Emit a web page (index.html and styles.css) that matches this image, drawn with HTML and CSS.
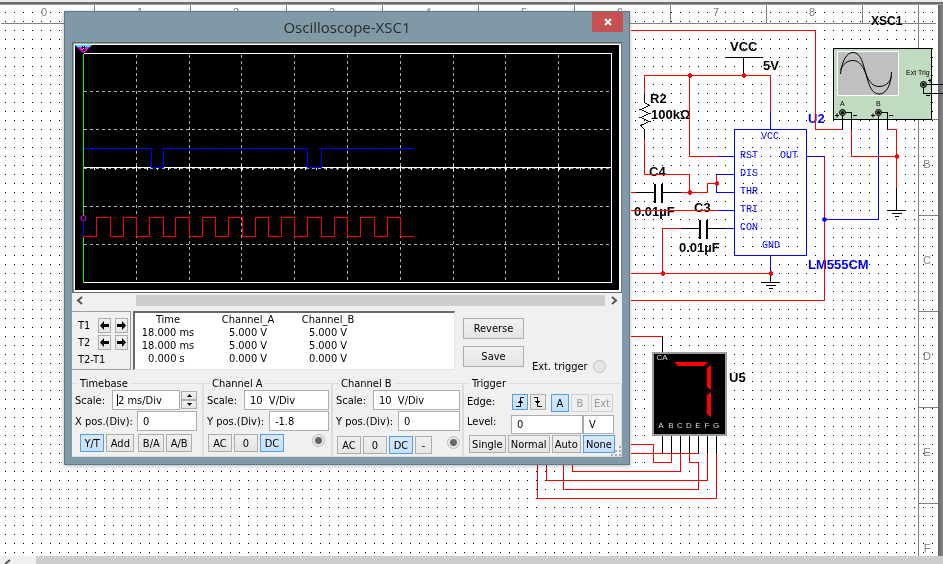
FILE: index.html
```html
<!DOCTYPE html>
<html lang="en">
<head>
<meta charset="utf-8">
<title>Oscilloscope-XSC1</title>
<link rel="stylesheet" href="styles.css">
</head>
<body>
<main class="workspace">
  <div class="sheet-top"></div>
  <div class="sheet">
    <svg class="schematic" width="938" height="551" viewBox="0 5 938 551" role="img" aria-label="Schematic">
      <defs>
        <pattern id="dots" x="5" y="3" width="9" height="9" patternUnits="userSpaceOnUse"><rect width="1" height="1" fill="#000"/></pattern>
      </defs>
      <rect x="0" y="10" width="938" height="544" fill="url(#dots)"/>
      <g transform="translate(.5 .5)">
        <path class="frame" d="M0 23H935M918 4V555M94 4V23M190 4V23M286 4V23M382 4V23M478 4V23M574 4V23M670 4V23M766 4V23M862 4V23M918 119H937M918 215H937M918 311H937M918 407H937M918 503H937"/>
      </g>
      <g class="ruler">
        <text x="44" y="16">0</text><text x="140" y="16">1</text><text x="236" y="16">2</text><text x="332" y="16">3</text><text x="428" y="16">4</text><text x="524" y="16">5</text><text x="620" y="16">6</text><text x="716" y="16">7</text><text x="812" y="16">8</text>
        <text x="927" y="168">B</text><text x="927" y="264">C</text><text x="927" y="360">D</text><text x="927" y="456">E</text><text x="927" y="552">F</text>
      </g>

      <g class="parts">
        <text x="871" y="25" class="small">XSC1</text>
        <text x="730" y="51">VCC</text><text x="763" y="70">5V</text>
        <text x="650" y="103">R2</text><text x="651" y="119">100kΩ</text>
        <text x="649" y="176">C4</text><text x="634" y="216">0.01µF</text>
        <text x="694" y="212">C3</text><text x="679" y="252">0.01µF</text>
        <text x="729" y="382">U5</text>
        <text x="808" y="123" class="ic">U2</text><text x="808" y="269" class="ic">LM555CM</text>
      </g>
      <g class="pins">
        <text x="761" y="139">VCC</text><text x="740" y="158">RST</text><text x="740" y="176">DIS</text><text x="740" y="194">THR</text><text x="740" y="212">TRI</text><text x="740" y="230">CON</text><text x="762" y="248">GND</text><text x="780" y="158">OUT</text>
      </g>

      <rect x="833.5" y="48.5" width="98" height="71" fill="#c0dcc0" stroke="#000"/>
      <rect x="837.5" y="51.5" width="61" height="44" fill="#c0c0c0" stroke="#fff"/>
      <path class="trace" d="M840.5 74C842 60 847 52.500 853 52.500C861 52.500 863 64 866 74C869 86 872 94 879 94C886 94 891 86 891.500 72M840.500 70C843 64 847 60.500 853 60.500C860 60.500 863 67 866 74C869 82 873 86.500 879 86.500C885 86.500 890 83 891.500 76"/>
      <g class="tiny"><text x="906" y="75">Ext Trig</text><text x="840" y="106">A</text><text x="876" y="106">B</text></g>
      <path class="marks" d="M835 115.500h4M837 113.500v4M853 115.500h4M871 115.500h4M873 113.500v4M889 115.500h4M928 80.500h4M930 78.500v4M926 95.500h4"/>

      <g transform="translate(.5 .5)">
        <path class="wire" d="M630 30H815V129H842M851 129V156H896M887 129H896V187M644 93V75H770V111M689 75V156H717M644 138V174H689V192M630 192H635M680 192H707V183H716V174M630 210H717M680 228H662V273M630 273H770M824 156V300H630M630 336H662"/>
        <path class="wire" d="M630 444H653V462H671V453M630 453H698M680 453V471H572V460M707 453V480H546V460M689 453V462H698V489H563V460M716 453V498H537V460"/>
        <path class="blue" d="M734 129H806V255H734ZM770 111V129M770 255V273M717 156H734M716 174H734M716 183V192H734M717 210H734M725 228H734M806 156H824M878 129V219H824"/>
        <path class="black" d="M842 112V129M842 112H851V129M878 112V129M878 112H887V129M923 84H942M923 84V93H942M725 57H762M743 57V75M644 93V102L649 105L640 109L649 113L640 117L649 121L640 125L644 129V138M635 192H654M661 192H680M680 228H699M706 228H725M770 273V282M761 282H779M765 285H775M768 288H772M896 187V210M887 210H905M891 213H901M894 216H898M662 335V353"/>
        <path class="black" d="M662 435V453M671 435V453M680 435V453M689 435V453M698 435V453M707 435V453M716 435V453"/>
        <path class="plate" d="M654.500 183V202M661.500 183V202M699.500 219V238M706.500 219V238"/>
      </g>
      <g fill="#f00"><path id="node" d="M689 73h1l2 2v1l-2 2h-1l-2-2v-1z"/><use href="#node" x="54"/><use href="#node" y="117"/><use href="#node" x="27" y="108"/><use href="#node" x="-27" y="198"/><use href="#node" x="81" y="198"/><use href="#node" x="207" y="81"/></g>
      <path d="M824 217h1l2 2v1l-2 2h-1l-2-2v-1z" fill="#00f"/>
      <g fill="#777" stroke="#000"><circle cx="842.5" cy="112.500" r="3"/><circle cx="878.5" cy="112.500" r="3"/><circle cx="923.5" cy="84.500" r="3"/></g>
      <g><circle cx="842.5" cy="112.500" r="1.500"/><circle cx="878.5" cy="112.500" r="1.500"/><circle cx="923.5" cy="84.500" r="1.500"/></g>

      <rect x="653" y="353" width="73" height="82" fill="#000" stroke="#999da0" stroke-width="2"/>
      <path fill="#f00" d="M674 362H708L704 366H678ZM707 368L711 365V390L707 387ZM707 395L711 392V417L707 414Z"/>
      <g class="leds"><text x="662" y="360">CA</text><text x="661" y="428">A</text><text x="671" y="428">B</text><text x="680" y="428">C</text><text x="689" y="428">D</text><text x="698" y="428">E</text><text x="707" y="428">F</text><text x="716" y="428">G</text></g>
    </svg>
    <div class="sheet-edge"></div>
  </div>
  <div class="sheet-scroll"><svg width="36" height="8" viewBox="0 0 36 8"><path d="M10 4L5 8" stroke="#555" stroke-width="2"/></svg><div class="thumb"></div></div>
</main>

<section class="window" aria-label="Oscilloscope-XSC1">
  <header class="titlebar">
    <h1>Oscilloscope-XSC1</h1>
    <button class="close" aria-label="Close"><svg width="8" height="8" viewBox="0 0 8 8"><path d="M1 1L7 7M7 1L1 7" stroke="#fff" stroke-width="2"/></svg></button>
  </header>
  <div class="client">
    <div class="scope">
      <svg width="544" height="245" viewBox="75 45 544 245" role="img" aria-label="Channel traces">
        <rect x="75" y="45" width="544" height="245"/>
        <g transform="translate(.5 .5)" class="plot">
          <path class="grid" d="M136 54V282M189 54V282M241 54V282M294 54V282M347 54V282M400 54V282M453 54V282M505 54V282M558 54V282M83 91H611M83 129H611M83 168H611M83 206H611M83 244H611"/>
          <path stroke="#fff" d="M83 53H611V282H83M83 167H611"/>
          <path stroke="#fff" d="M136 165V170M189 165V170M241 165V170M294 165V170M347 165V170M400 165V170M453 165V170M505 165V170M558 165V170"/>
          <path stroke="#fff" stroke-width="2" stroke-dasharray="1 9.560" stroke-dashoffset="1" d="M84 168.500H611"/>
          <path stroke="#0f0" d="M83 53V282"/>
          <path stroke="#00f" d="M83 148H151V167H163V148H307V167H321V148H413M83 218V236M93 149h1M122 149h1M191 149h1M220 149h1M250 149h1M279 149h1M350 149h1M379 149h1M408 149h1"/>
          <path stroke="#f00" d="M83 236H96V217H110V236H123V217H136V236H149V217H163V236H175V217H189V236H202V217H215V236H228V217H242V236H255V217H268V236H281V217H294V236H307V217H321V236H334V217H347V236H360V217H374V236H387V217H400V236H413"/>
        </g>
        <path fill="#0ff" d="M75 45H92L90 47H77Z"/><path fill="#f0f" d="M77 47H90L84 53H83Z"/><path d="M82 46h3v5h-3z"/><path fill="#ff0" d="M83 46h1v1h-1zM83 48h1v1h-1zM82 49h1v1h-1z"/>
        <circle cx="83.500" cy="218" r="2.500" fill="#000" stroke="#f0f"/>
      </svg>
    </div>
    <div class="timescroll">
      <svg width="16" height="11" viewBox="0 0 16 11"><path d="M10 2L6 5.500L10 9" fill="none" stroke="#555" stroke-width="2"/></svg>
      <div class="thumb"></div>
      <svg width="17" height="11" viewBox="0 0 17 11"><path d="M7 2L11 5.500L7 9" fill="none" stroke="#555" stroke-width="2"/></svg>
    </div>
    <div class="info">
      <div class="cursors">
        <span>T1</span>
        <button aria-label="T1 left"><svg width="11" height="11" viewBox="0 0 11 11"><path d="M1 5.500L5 1V4H10V7H5V10Z"/></svg></button>
        <button aria-label="T1 right"><svg width="11" height="11" viewBox="0 0 11 11"><path d="M10 5.500L6 1V4H1V7H6V10Z"/></svg></button>
        <span>T2</span>
        <button aria-label="T2 left"><svg width="11" height="11" viewBox="0 0 11 11"><path d="M1 5.500L5 1V4H10V7H5V10Z"/></svg></button>
        <button aria-label="T2 right"><svg width="11" height="11" viewBox="0 0 11 11"><path d="M10 5.500L6 1V4H1V7H6V10Z"/></svg></button>
        <span class="wide">T2-T1</span>
      </div>
      <div class="readout">
        <table>
          <thead><tr><th>Time</th><th class="mid">Channel_A</th><th>Channel_B</th></tr></thead>
          <tbody>
            <tr><td>18.000 ms</td><td>5.000 V</td><td>5.000 V</td></tr>
            <tr><td>18.000 ms</td><td>5.000 V</td><td>5.000 V</td></tr>
            <tr><td>0.000 s&nbsp;</td><td>0.000 V</td><td>0.000 V</td></tr>
          </tbody>
        </table>
      </div>
      <div class="actions"><button>Reverse</button><button>Save</button></div>
      <div class="ext"><label for="ext">Ext. trigger</label><input type="radio" id="ext" disabled></div>
    </div>
    <div class="groups">
      <fieldset class="timebase">
        <legend>Timebase</legend>
        <div class="row"><label for="tb">Scale:</label><div class="field caret"><input id="tb" value="2 ms/Div"></div><div class="spin"><button aria-label="Increase"><svg width="5" height="3" viewBox="0 0 5 3"><path d="M0 3L2.500 0L5 3Z"/></svg></button><button aria-label="Decrease"><svg width="5" height="3" viewBox="0 0 5 3"><path d="M0 0L2.500 3L5 0Z"/></svg></button></div></div>
        <div class="row"><label for="xp">X pos.(Div):</label><div class="field"><input id="xp" value="0"></div></div>
        <div class="buttons"><button class="on">Y/T</button><button>Add</button><button>B/A</button><button>A/B</button></div>
      </fieldset>
      <fieldset>
        <legend>Channel A</legend>
        <div class="row"><label for="as">Scale:</label><div class="field"><input id="as" value="10  V/Div"></div></div>
        <div class="row"><label for="ay">Y pos.(Div):</label><div class="field"><input id="ay" value="-1.8"></div></div>
        <div class="buttons"><button>AC</button><button>0</button><button class="on">DC</button><input type="radio" checked aria-label="Channel A input"></div>
      </fieldset>
      <fieldset>
        <legend>Channel B</legend>
        <div class="row"><label for="bs">Scale:</label><div class="field"><input id="bs" value="10  V/Div"></div></div>
        <div class="row"><label for="by">Y pos.(Div):</label><div class="field"><input id="by" value="0"></div></div>
        <div class="buttons low"><button>AC</button><button>0</button><button class="on">DC</button><button class="narrow">-</button><input type="radio" checked aria-label="Channel B input"></div>
      </fieldset>
      <fieldset class="trigger">
        <legend>Trigger</legend>
        <div class="row"><span class="name">Edge:</span>
          <button class="edge on" aria-label="Rising"><svg width="12" height="12" viewBox="0 0 12 12"><path d="M2 10.500H6.500V1.500H10M4 6.500H9M5 5.500H8" fill="none" stroke="#000"/></svg></button>
          <button class="edge" aria-label="Falling"><svg width="12" height="12" viewBox="0 0 12 12"><path d="M2 1.500H5.500V10.500H10M3 5.500H8M4 6.500H7" fill="none" stroke="#000"/></svg></button>
          <button class="src on">A</button><button class="src" disabled>B</button><button class="src last" disabled>Ext</button></div>
        <div class="row level"><label for="lv">Level:</label><div class="field"><input id="lv" value="0"></div><div class="field unit"><input aria-label="Unit" value="V"></div></div>
        <div class="buttons"><button>Single</button><button>Normal</button><button>Auto</button><button class="on">None</button></div>
      </fieldset>
    </div>
    <svg class="grip" width="10" height="10" viewBox="0 0 10 10"><path fill="#aaa" d="M8 0h2v2h-2zM4 4h2v2h-2zM8 4h2v2h-2zM0 8h2v2h-2zM4 8h2v2h-2zM8 8h2v2h-2z"/></svg>
  </div>
</section>
</body>
</html>
```
FILE: styles.css
```css
* { box-sizing: border-box; }
html, body { height: 100%; }
body { margin: 0; overflow: hidden; background: #fff; color: #000; font: 11px/13px "DejaVu Sans Condensed", "Open Sans", sans-serif; }
svg { display: block; flex: none; }
button, input { font: inherit; color: inherit; margin: 0; }

.workspace { height: 100vh; display: flex; flex-direction: column; }
.sheet-top { height: 5px; flex: none; background: #6d6d6d; border-top: 2px solid #e8eaeb; border-bottom: 1px solid #999; }
.sheet { flex: 1; min-height: 0; display: flex; overflow: hidden; }
.schematic { flex: 1 0 0; overflow: visible; }
.schematic g path, .plot path { shape-rendering: crispEdges; }
.sheet-edge { width: 6px; background: linear-gradient(90deg, #666, #858585); mix-blend-mode: multiply; }
.sheet-scroll { height: 8px; flex: none; display: flex; background: #f0f0f0; }
.thumb { flex: 1; background: #cdcdcd; }

.frame { stroke: #808080; fill: none; }
.ruler text { font: 11px "Liberation Sans", sans-serif; fill: #808080; text-anchor: middle; }
.parts text { font: bold 13px "Liberation Sans", sans-serif; fill: #000; }
.parts .small { font-size: 12px; }
.parts .ic { fill: #00f; }
.pins text { font: 10px "Liberation Mono", monospace; fill: #00f; }
.tiny text { font: 7px "Liberation Sans", sans-serif; }
.leds text { font: 8px "Liberation Sans", sans-serif; fill: #ddd; text-anchor: middle; }
.trace { fill: none; stroke: #000; }
.marks, .black { fill: none; stroke: #000; }
.wire { fill: none; stroke: #f00; }
.blue { fill: none; stroke: #00f; }
.plate { stroke: #000; stroke-width: 2; }
.plot path { fill: none; }
.plot .grid { stroke: #b0b0b0; stroke-dasharray: 3 3; }

.window { position: absolute; left: 64px; top: 11px; width: 566px; background: #7f9aa6; border: 1px solid #5f7884; padding: 0 7px 7px; box-shadow: 0 1px 4px rgba(0, 0, 0, .3); }
.titlebar { position: relative; height: 30px; display: flex; align-items: center; justify-content: center; }
.titlebar h1 { margin: 0; font: 15px/16px "Open Sans", sans-serif; color: #2b2b2b; }
.close { position: absolute; right: -1px; top: 0; width: 31px; height: 20px; border: 0; background: #c75050; display: grid; place-items: center; padding: 0; }
.client { position: relative; background: #f0f0f0; }

.scope { border: 1px solid #696969; border-right-color: #777; box-shadow: inset 1px 1px #a0a0a0; padding: 2px; background: #fff; }
.scope svg { width: 100%; }
.timescroll { display: flex; height: 11px; margin-top: 2px; }
.timescroll .thumb { margin-left: 48px; }

.info { display: flex; height: 59px; margin-top: 5px; }
.cursors { width: 59px; margin-right: 2px; padding: 6px 2px 0 6px; border: 1px solid #a0a0a0; border-left: 0; display: grid; grid-template-columns: 16px 13px 13px; grid-auto-rows: 15px; gap: 2px 4px; align-items: center; align-content: start; }
.cursors .wide { grid-column: 1 / -1; white-space: nowrap; }
button { border: 1px solid #adadad; background: linear-gradient(#f0f0f0, #e5e5e5); padding: 0; text-align: center; white-space: nowrap; }
.cursors button { height: 15px; display: grid; place-items: center; }
.readout { width: 322px; background: #fff; border: 1px solid #e3e3e3; border-top: 2px solid #696969; border-left: 2px solid #696969; }
table { border-collapse: collapse; table-layout: fixed; width: 226px; }
th, td { padding: 0; font-weight: normal; text-align: center; white-space: nowrap; }
th { width: 66px; }
th.mid { width: 94px; }
.actions { display: flex; flex-direction: column; gap: 7px; margin: 7px 8px 0; width: 61px; }
.actions button { height: 21px; }
.ext { display: flex; align-items: center; gap: 5px; align-self: flex-end; height: 21px; margin-bottom: -7px; }

input[type="radio"] { appearance: none; width: 13px; height: 13px; flex: none; border: 1px solid #bcbcbc; border-radius: 50%; background: #f0f0f0; }
input[type="radio"]:disabled { background: #e6e6e6; }
input[type="radio"]:checked { background: radial-gradient(circle, #666 0 3px, #e6e6e6 4px); }

.groups { display: grid; grid-template-columns: 132px 129px 131px 1fr; height: 80px; margin-top: 7px; }
fieldset { min-width: 0; margin: 0; padding: 0 2px 0 3px; border: 1px solid #dcdcdc; border-right-width: 2px; border-left: 0; }
legend { margin-left: 3px; padding: 0 2px; height: 13px; }
.row { display: flex; height: 20px; margin-bottom: 1px; align-items: center; }
.row label, .row .name { flex: none; min-width: 37px; white-space: nowrap; }
.field { position: relative; flex: 1; min-width: 0; align-self: stretch; }
.row:nth-of-type(2) label { width: 62px; }
.field input { width: 100%; height: 100%; border: 1px solid #abadb3; background: #fff; padding: 0 5px; white-space: pre; }
.caret::before { content: ""; position: absolute; left: 5px; top: 4px; width: 1px; height: 12px; background: #000; }
.spin { width: 16px; margin: 0 0 0 1px; display: flex; flex-direction: column; }
.spin button { height: 9px; display: grid; place-items: center; }
.timebase { padding-right: 5px; }
.buttons { display: flex; gap: 2px; margin: 3px 0 0 1px; height: 18px; }
.buttons button { min-width: 24px; }
.buttons .narrow { min-width: 17px; }
.buttons input { margin: 0 4px 0 auto; }
.buttons.low { margin-top: 5px; }
.buttons.low input { margin-right: 0; }
.timebase .buttons { margin-left: 5px; margin-right: 5px; }
.timebase .buttons button { flex: 1 1 auto; }
.timebase .buttons button:nth-child(3) { margin-left: 2px; }
.on { border-color: #569de5; background: linear-gradient(#d6e8fb, #c4e0fb); }
.trigger { padding: 0 7px 0 3px; border-right-width: 1px; }
.trigger .row { gap: 2px; padding-top: 4px; height: 21px; align-items: flex-start; margin: 0; }
.trigger .name { width: 43px; padding-top: 1px; }
.trigger .edge { width: 16px; height: 16px; display: grid; place-items: center; }
.trigger .src { width: 18px; height: 18px; }
.trigger .edge + .src { margin-left: 3px; }
.trigger .last { width: 22px; }
.trigger .level { gap: 0; height: 23px; }
.trigger .level label { width: 44px; }
.trigger .unit { flex: none; width: 31px; }
.trigger .buttons { margin: 1px -1px 0 2px; }
.trigger .buttons button { flex: 1 1 auto; }
button:disabled { color: #999; border-color: #d0d0d0; background: #efefef; }
.grip { position: absolute; right: 1px; bottom: 1px; }
```
